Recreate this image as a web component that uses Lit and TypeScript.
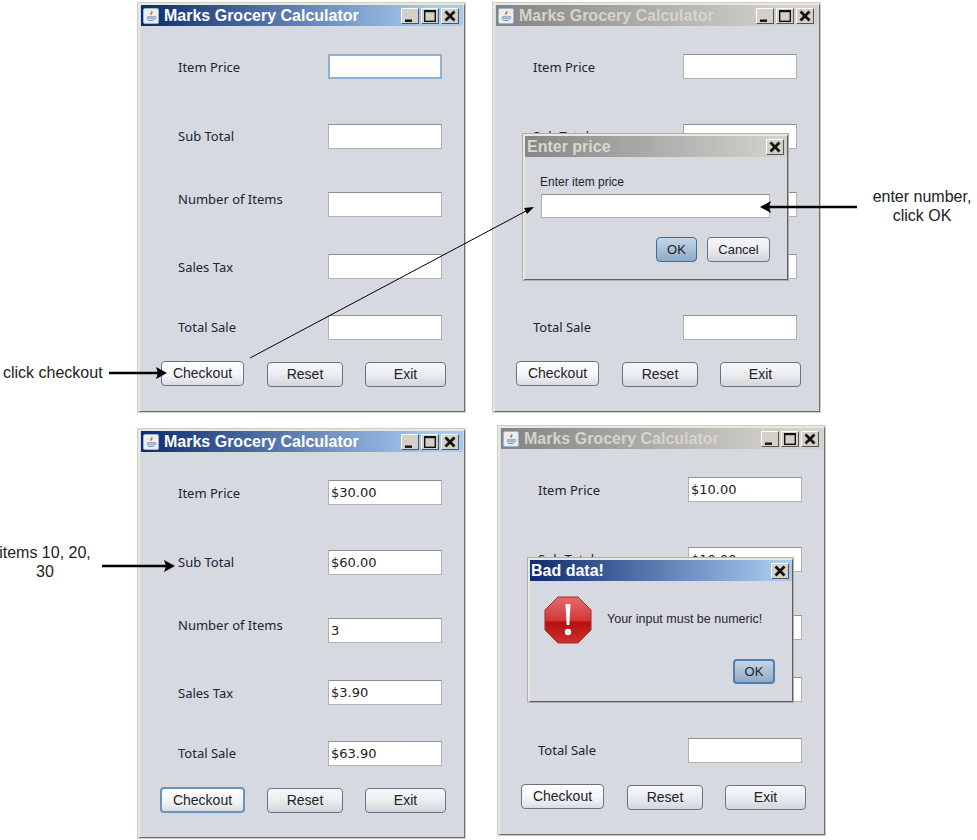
import { LitElement, html, css, svg } from "lit";
import { customElement, property } from "lit/decorators.js";

const javaIcon = html`<svg class="ji" viewBox="0 0 16 16" width="16" height="16">
  <rect x="0.5" y="0.5" width="15" height="15" rx="1.5" fill="#e9eef5" stroke="#9fb4d0"/>
  <path d="M8.5 2C9.5 3.5 6.5 4.5 7.2 6.2 7.5 7 8 7.5 8 7.5 7.8 6.5 10.5 5.2 9.5 3.8Z" fill="#e2761b"/>
  <path d="M4 8.5H11V9.5H4ZM3.5 10.5H11.5V11.3H3.5ZM5 12.2H10.5V13H5Z" fill="#5a7fa8"/>
  <path d="M11 8.5Q13.5 8.5 12.8 10 12.2 11 11 11" fill="none" stroke="#5a7fa8" stroke-width=".8"/>
</svg>`;

const minIcon = html`<svg viewBox="0 0 14 14" width="14" height="14"><rect x="2" y="10.5" width="7" height="2.4" fill="#111"/></svg>`;
const maxIcon = html`<svg viewBox="0 0 14 14" width="14" height="14"><rect x="1.7" y="1.7" width="10.6" height="10.6" fill="none" stroke="#111" stroke-width="1.4"/><rect x="1" y="1" width="12" height="2.2" fill="#111"/></svg>`;
const closeIcon = html`<svg viewBox="0 0 14 14" width="14" height="14"><path d="M2.5 2.5L11.5 11.5M11.5 2.5L2.5 11.5" stroke="#111" stroke-width="2.8"/></svg>`;

@customElement("calc-window")
class CalcWindow extends LitElement {
  @property({ type: Boolean }) active = false;
  @property({ type: Array }) values: string[] = ["", "", "", "", ""];
  @property({ type: Boolean }) focusField = false;
  @property({ type: Boolean }) focusCheckout = false;

  static styles = css`
    :host { display: block; width: 329px; height: 411px; box-sizing: border-box;
      background: #d6d9e0; border: 3px solid #e9e7df; border-right: 2px solid #6f6d67; border-bottom: 2px solid #6f6d67;
      outline: 1px solid #cfcdc6; outline-offset: -1px; }
    .title { height: 21px; margin: 0 1px 0 1px; display: flex; align-items: center; padding-left: 2px; gap: 5px;
      background: linear-gradient(90deg, #0f2b6e 0%, #a6caf0 90%); color: #fff;
      font: bold 16px "Liberation Sans", Arial, sans-serif; white-space: nowrap; }
    .title.off { background: linear-gradient(90deg, #838383 0%, #d3d2cc 90%); color: #d6d4cc; }
    .ji { flex: none; }
    .tbtns { margin-left: auto; display: flex; gap: 2px; padding-right: 4px; }
    .tb { width: 18px; height: 16px; box-sizing: border-box; background: #d4d0c8; display: flex; align-items: center; justify-content: center;
      border: 1px solid; border-color: #fff #555 #555 #fff; }
    .form { padding: 28px 0 0 38px; }
    .row { display: flex; height: 25px; align-items: center; margin-top: 43px; width: 300px; }
    .row:nth-child(1) { margin-top: 0; }
    .row:nth-child(2) { margin-top: 45px; }
    .row:nth-child(4) { margin-top: 37px; }
    .row:nth-child(5) { margin-top: 36px; }
    .lbl { width: 150px; font: 13px "Noto Sans", "DejaVu Sans", sans-serif; color: #222233; white-space: nowrap; flex: none; }
    .row:nth-child(2) .lbl, .row:nth-child(5) .lbl { transform: translateY(-1px); }
    .lbl.up { transform: translateY(-6px); }
    .fld { width: 114px; height: 25px; box-sizing: border-box; background: #fff; border: 1px solid #b2b2b2; flex: none;
      border-top-color: #8f8f8f; padding: 0 2px; display: flex; align-items: center;
      font: 13px "DejaVu Sans", sans-serif; color: #222; }
    .fld.focus { border: 2px solid #8fb0cf; }
    .btns { display: flex; align-items: flex-start; margin: 22px 0 0 21px; }
    .btn { height: 25px; box-sizing: border-box; border: 1px solid #6b7380; border-radius: 4px; text-align: center;
      font: 14px/23px "Liberation Sans", Arial, sans-serif; color: #222;
      background: linear-gradient(#f6f7f9 0%, #eceef1 45%, #d2d6dc 100%); }
    .checkout { width: 83px; margin-top: -1px; background: linear-gradient(#fff 0%, #f4f5f8 55%, #d8dce3 100%); }
    .checkout.focus { width: 85px; height: 26px; margin-left: -1px; border: 2px solid #6a92bd; line-height: 22px; }
    .reset { width: 76px; margin-left: 23px; }
    .checkout.focus + .reset { margin-left: 22px; }
    .exit { width: 81px; margin-left: 22px; }
  `;

  render() {
    const labels = ["Item Price", "Sub Total", "Number of Items", "Sales Tax", "Total Sale"];
    return html`
      <div class="title ${this.active ? "" : "off"}">
        ${javaIcon}<span>Marks Grocery Calculator</span>
        <div class="tbtns">
          <div class="tb">${minIcon}</div><div class="tb">${maxIcon}</div><div class="tb">${closeIcon}</div>
        </div>
      </div>
      <div class="form">
        ${labels.map((l, i) => html`<div class="row">
          <div class="lbl ${i === 2 ? "up" : ""}">${l}</div>
          <div class="fld ${this.focusField && i === 0 ? "focus" : ""}">${this.values[i]}</div>
        </div>`)}
      </div>
      <div class="btns">
        <div class="btn checkout ${this.focusCheckout ? "focus" : ""}">Checkout</div>
        <div class="btn reset">Reset</div>
        <div class="btn exit">Exit</div>
      </div>`;
  }
}

@customElement("app-root")
class AppRoot extends LitElement {
  static styles = css`
    :host { display: block; position: relative; width: 977px; height: 840px; overflow: hidden; background: #fff; }
    .win { position: absolute; }
    .w1 { left: 137px; top: 2px; }
    .w2 { left: 492px; top: 2px; }
    .w3 { left: 137px; top: 428px; }
    .w4 { left: 497px; top: 425px; }
    .dlg { position: absolute; box-sizing: border-box; background: #d6d9e0;
      border: 3px solid #e9e7df; border-right: 2px solid #5f5e59; border-bottom: 2px solid #5f5e59;
      outline: 1px solid #b0afa9; outline-offset: -1px; font-family: "Liberation Sans", Arial, sans-serif; }
    .d1 { left: 522px; top: 133px; width: 267px; height: 148px; }
    .d2 { left: 527px; top: 557px; width: 267px; height: 146px; }
    .dt { height: 21px; display: flex; align-items: center; padding: 0 2px; font: bold 16px "Liberation Sans", Arial, sans-serif;
      color: #d9d7cf; background: linear-gradient(90deg, #868686, #d0d0cc 95%); }
    .dt.on { color: #fff; padding-left: 1px; background: linear-gradient(90deg, #0f2b6e, #a6caf0 95%); }
    .dt .tb { margin-left: auto; margin-right: 1px; width: 18px; height: 16px; box-sizing: border-box; background: #d4d0c8; display: flex; align-items: center; justify-content: center;
      border: 1px solid; border-color: #fff #555 #555 #fff; }
    .d1 .body { padding: 18px 17px 0 15px; }
    .dl { font-size: 12px; line-height: 14px; color: #222233; }
    .df { margin: 5px 0 0 1px; width: 229px; height: 24px; box-sizing: border-box; background: #fff; border: 1px solid #b2b2b2; border-top-color: #8f8f8f; }
    .acts { display: flex; justify-content: flex-end; gap: 10px; margin-top: 19px; }
    .b { height: 25px; box-sizing: border-box; border: 1px solid #6b7380; border-radius: 4px; text-align: center;
      font-size: 13px; line-height: 23px; color: #222; background: linear-gradient(#f6f7f9, #eceef1 45%, #d2d6dc); }
    .b.cancel { width: 63px; }
    .b.ok { width: 41px; background: linear-gradient(#c5d5e6, #a9c0d8 50%, #8fabc8); border-color: #456a90; }
    .d2 .body { display: flex; align-items: flex-start; padding: 15px 0 0 14px; gap: 15px; }
    .msg { font-size: 12.5px; line-height: 14px; color: #2a2238; margin-top: 16px; white-space: nowrap; }
    .d2 .b.ok { position: absolute; left: 203px; top: 99px; width: 42px; border: 2px solid #4f7fae; line-height: 21px; }
    .note { position: absolute; font: 16px/19px "Liberation Sans", Arial, sans-serif; color: #222; text-align: center; white-space: nowrap; }
    .n1 { left: 3px; top: 363px; }
    .n2 { left: 840px; top: 187px; width: 164px; }
    .n3 { left: -20px; top: 543px; width: 130px; }
    svg.over { position: absolute; left: 0; top: 0; pointer-events: none; }
  `;

  private arrow(x1: number, y: number, tip: number) {
    const dir = tip > x1 ? 1 : -1;
    return svg`<path d="M${x1} ${y}H${tip - dir * 9}" stroke="#000" stroke-width="2.4" fill="none"/>
      <path d="M${tip} ${y}L${tip - dir * 11} ${y - 6}L${tip - dir * 9} ${y}L${tip - dir * 11} ${y + 6}Z" fill="#000"/>`;
  }

  render() {
    return html`
      <calc-window class="win w1" active focusField></calc-window>
      <calc-window class="win w2"></calc-window>
      <calc-window class="win w3" active focusCheckout .values=${["$30.00", "$60.00", "3", "$3.90", "$63.90"]}></calc-window>
      <calc-window class="win w4" .values=${["$10.00", "$10.00", "", "", ""]}></calc-window>

      <div class="dlg d1">
        <div class="dt"><span>Enter price</span><div class="tb">${closeIcon}</div></div>
        <div class="body">
          <div class="dl">Enter item price</div>
          <div class="df"></div>
          <div class="acts"><div class="b ok">OK</div><div class="b cancel">Cancel</div></div>
        </div>
      </div>

      <div class="dlg d2">
        <div class="dt on"><span>Bad data!</span><div class="tb">${closeIcon}</div></div>
        <div class="body">
          <svg viewBox="0 0 48 48" width="48" height="48">
            <defs><linearGradient id="stop" x1="0" y1="0" x2="0" y2="1">
              <stop offset="0" stop-color="#e66a6a"/><stop offset=".5" stop-color="#d23a3a"/><stop offset=".55" stop-color="#b90f0f"/><stop offset="1" stop-color="#cf3030"/>
            </linearGradient></defs>
            <path d="M14 1H34L47 14V34L34 47H14L1 34V14Z" fill="url(#stop)" stroke="#a02a2a"/>
            <path d="M21.5 8H26.5L25.3 29H22.7Z" fill="#fff"/><circle cx="24" cy="36" r="3.2" fill="#fff"/>
          </svg>
          <div class="msg">Your input must be numeric!</div>
        </div>
        <div class="b ok">OK</div>
      </div>

      <div class="note n1">click checkout</div>
      <div class="note n2">enter number,<br />click OK</div>
      <div class="note n3">items 10, 20,<br />30</div>

      <svg class="over" width="977" height="840" viewBox="0 0 977 840">
        ${this.arrow(109, 373, 167)}
        ${this.arrow(857, 207, 760)}
        ${this.arrow(102, 566, 175)}
        <path d="M250 358L527 210.5" stroke="#000" stroke-width="1" fill="none"/>
        <path d="M534 207L524 208L527 214Z" fill="#000"/>
      </svg>`;
  }
}
